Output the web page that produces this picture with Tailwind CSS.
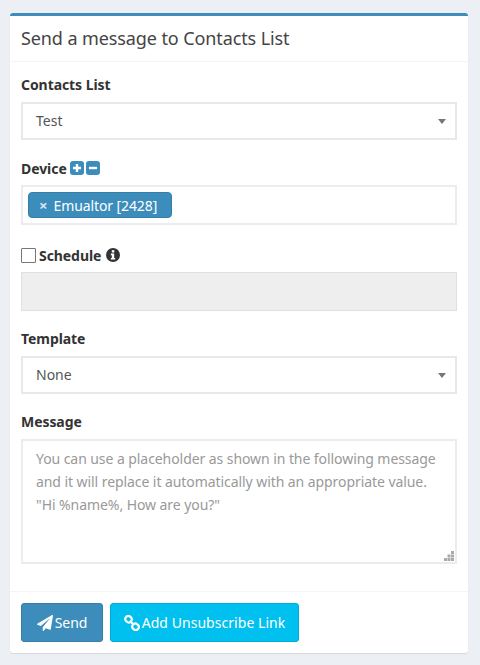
<!DOCTYPE html>
<html lang="en">
  <head>
    <meta charset="UTF-8" />
    <meta name="viewport" content="width=device-width, initial-scale=1.0" />
    <title>Send a message</title>
    <script src="https://cdn.jsdelivr.net/npm/@tailwindcss/browser@4"></script>
  </head>
  <body class="bg-[#ecf0f5] font-['Noto_Sans',sans-serif] text-[14px] text-[#333] h-[665px] overflow-hidden">
    <div class="pt-[13px] pl-[10px] w-[468px]">
      <div class="bg-white rounded-[3px] border-t-[3px] border-[#3c8dbc] shadow-[0_1px_1px_rgba(0,0,0,0.1)] h-[640px] flex flex-col">
        <div class="h-[46px] px-[11px] flex items-center border-b border-[#f4f4f4]">
          <h3 class="text-[18px] text-[#444] tracking-[-0.1px]">Send a message to Contacts List</h3>
        </div>

        <form class="px-[11px] flex-1">
          <label class="block mt-[13px] h-[20px] leading-[20px] font-bold text-[#333] tracking-[-0.07px]">Contacts List</label>
          <div class="mt-[7px] h-[38px] border-2 border-[#e6e8ec] flex items-center justify-between pl-[13px] pr-[9px] text-[#555]">
            <span class="-mt-[2px]">Test</span>
            <span class="w-0 h-0 border-x-[4px] border-t-[5px] border-x-transparent border-t-[#777]"></span>
          </div>

          <div class="mt-[18px] h-[20px] flex items-center gap-[2px]">
            <label class="font-bold tracking-[-0.07px] mr-[1px]">Device</label>
            <svg class="w-[14px] h-[14px]" viewBox="0 0 14 14">
              <rect width="14" height="14" rx="3" fill="#3c8dbc" />
              <path d="M7 3v8M3 7h8" stroke="#fff" stroke-width="2.4" />
            </svg>
            <svg class="w-[14px] h-[14px]" viewBox="0 0 14 14">
              <rect width="14" height="14" rx="3" fill="#3c8dbc" />
              <path d="M3 7h8" stroke="#fff" stroke-width="2.4" />
            </svg>
          </div>
          <div class="mt-[7px] h-[40px] border-2 border-[#eaecef] flex items-center pl-[5px]">
            <span class="h-[26px] w-[144px] bg-[#3c8dbc] border border-[#367fa9] rounded-[4px] text-white flex items-center pl-[10px] text-[14px] tracking-[-0.1px]">
              <span class="text-[#d5e6f0] text-[15px] font-bold mr-[6px]">×</span>Emualtor [2428]
            </span>
          </div>

          <div class="mt-[20px] h-[20px] flex items-center">
            <span class="w-[15px] h-[15px] border border-[#767676] rounded-[1px] bg-white"></span>
            <label class="ml-[3px] font-bold tracking-[-0.07px]">Schedule</label>
            <svg class="ml-[5px] w-[14px] h-[14px]" viewBox="0 0 14 14">
              <circle cx="7" cy="7" r="7" fill="#333" />
              <rect x="5.8" y="2.2" width="2.5" height="2.3" fill="#fff" />
              <path d="M4.8 5.6h3.4v4.3h1v1.6H4.8V9.9h1V7.2h-1z" fill="#fff" />
            </svg>
          </div>
          <div class="mt-[7px] h-[39px] bg-[#eee] border border-[#dde1e6]"></div>

          <label class="block mt-[18px] h-[20px] leading-[20px] font-bold tracking-[-0.07px]">Template</label>
          <div class="mt-[7px] h-[38px] border-2 border-[#e6e8ec] flex items-center justify-between pl-[13px] pr-[9px] text-[#555]">
            <span class="-mt-[2px]">None</span>
            <span class="w-0 h-0 border-x-[4px] border-t-[5px] border-x-transparent border-t-[#777]"></span>
          </div>

          <label class="block mt-[18px] h-[20px] leading-[20px] font-bold tracking-[-0.07px]">Message</label>
          <div class="relative mt-[7px] h-[125px] border-2 border-[#eaecef] pl-[13px] pr-[10px] pt-[6px] text-[#999] leading-[23px] text-[14px] tracking-[-0.07px]">
            <p>You can use a placeholder as shown in the following message</p>
            <p>and it will replace it automatically with an appropriate value.</p>
            <p>"Hi %name%, How are you?"</p>
            <svg class="absolute right-[1px] bottom-[1px] w-[10px] h-[10px]" viewBox="0 0 10 10" fill="#aaa">
              <rect x="7" y="0" width="3" height="3" />
              <rect x="3.5" y="3.5" width="3" height="3" />
              <rect x="7" y="3.5" width="3" height="3" />
              <rect x="0" y="7" width="3" height="3" />
              <rect x="3.5" y="7" width="3" height="3" />
              <rect x="7" y="7" width="3" height="3" />
            </svg>
          </div>
        </form>

        <div class="h-[62px] border-t border-[#f4f4f4] px-[11px] pt-[11px] flex gap-[7px]">
          <button class="w-[82px] h-[39px] bg-[#3c8dbc] border border-[#367fa9] rounded-[3px] text-white flex items-center justify-center gap-[2px] tracking-[-0.1px]">
            <svg class="w-[16px] h-[16px]" viewBox="0 0 1792 1792" fill="#fff">
              <path d="M1764 11q33 24 27 64l-256 1536q-5 29-32 45-14 8-31 8-11 0-24-5l-453-185-242 295q-18 23-49 23-13 0-22-4-19-7-30.500-23.500t-11.500-36.500v-349l864-1059-1069 925-395-162q-37-14-40-55-2-40 32-59l1664-960q15-9 32-9 20 0 36 11z" />
            </svg>
            Send
          </button>
          <button class="w-[189px] h-[39px] bg-[#00c0ef] border border-[#00acd6] rounded-[3px] text-white flex items-center justify-center gap-[2px] tracking-[0.05px]">
            <svg class="w-[16px] h-[16px]" viewBox="0 0 16 16" fill="none" stroke="#fff" stroke-width="2.200">
              <rect x="1.200" y="1.200" width="6.500" height="6" rx="2.800" transform="rotate(40 4.500 4.200)" />
              <rect x="8.300" y="8.800" width="6.500" height="6" rx="2.800" transform="rotate(40 11.500 11.800)" />
              <path d="M6.500 6.500l3 3" stroke-width="2.400" />
            </svg>
            Add Unsubscribe Link
          </button>
        </div>
      </div>
    </div>
  </body>
</html>
